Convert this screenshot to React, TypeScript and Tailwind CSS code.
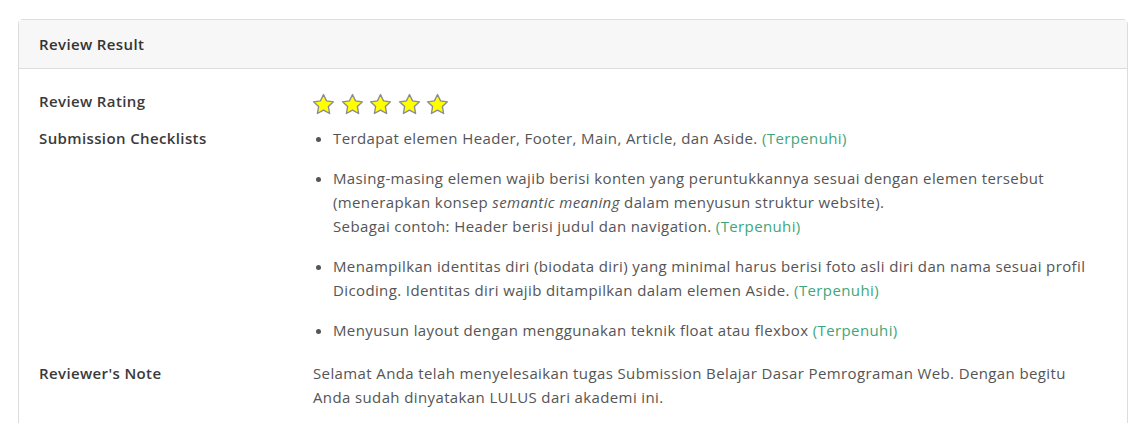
const checklists = [
  {
    lines: [
      <>Terdapat elemen Header, Footer, Main, Article, dan Aside.</>,
    ],
  },
  {
    lines: [
      <>Masing-masing elemen wajib berisi konten yang peruntukkannya sesuai dengan elemen tersebut</>,
      <>(menerapkan konsep <em>semantic meaning</em> dalam menyusun struktur website).</>,
      <>Sebagai contoh: Header berisi judul dan navigation.</>,
    ],
  },
  {
    lines: [
      <>Menampilkan identitas diri (biodata diri) yang minimal harus berisi foto asli diri dan nama sesuai profil Dicoding. Identitas diri wajib ditampilkan dalam elemen Aside.</>,
    ],
  },
  {
    lines: [<>Menyusun layout dengan menggunakan teknik float atau flexbox</>],
  },
];

function Star() {
  return (
    <svg width="23" height="23" viewBox="0 0 24 24">
      <path
        d="M12 1.6l3.2 6.6 7.2 1-5.3 5 1.3 7.2L12 17.9l-6.4 3.5 1.3-7.2-5.3-5 7.2-1z"
        fill="#ffff00"
        stroke="#8a8a94"
        strokeWidth="1.4"
        strokeLinejoin="round"
      />
    </svg>
  );
}

export default function App() {
  return (
    <main
      className="pt-[19px] pl-[18px] bg-white min-h-[423px] text-[15px] leading-6 tracking-[0.38px] text-[#555]"
      style={{ fontFamily: '"Open Sans", "Noto Sans", sans-serif' }}
    >
      <section className="w-[1110px] border border-[#dcdcdc] rounded-t-[5px]">
        <header className="h-[49px] bg-[#f7f7f7] border-b border-[#dcdcdc] px-5 flex items-center">
          <h1 className="font-semibold text-[#333] text-[15px]">Review Result</h1>
        </header>

        <div className="px-5 pt-5 pb-6">
          <div className="flex mb-[10px]">
            <div className="w-[274px] font-semibold text-[#3a3a3a]">Review Rating</div>
            <div className="flex gap-[5.5px] pt-[4px] -ml-[1px]">
              {[0, 1, 2, 3, 4].map((i) => (
                <Star key={i} />
              ))}
            </div>
          </div>

          <div className="flex mb-[19px]">
            <div className="w-[274px] shrink-0 font-semibold text-[#3a3a3a]">Submission Checklists</div>
            <ul className="list-disc pl-5 space-y-4 w-[794px]">
              {checklists.map((item, i) => (
                <li key={i}>
                  {item.lines.map((line, j) => (
                    <span key={j}>
                      {line}
                      {j < item.lines.length - 1 ? <br /> : null}
                    </span>
                  ))}{' '}
                  <span className="text-[#3ea67b]">(Terpenuhi)</span>
                </li>
              ))}
            </ul>
          </div>

          <div className="flex">
            <div className="w-[274px] shrink-0 font-semibold text-[#3a3a3a]">Reviewer's Note</div>
            <p className="w-[794px]">
              Selamat Anda telah menyelesaikan tugas Submission Belajar Dasar Pemrograman Web. Dengan begitu Anda
              sudah dinyatakan LULUS dari akademi ini.
            </p>
          </div>
        </div>
      </section>
    </main>
  );
}
